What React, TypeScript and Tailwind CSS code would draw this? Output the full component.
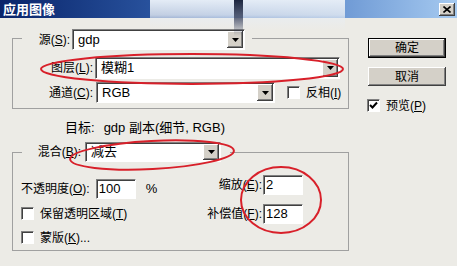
import type { ReactNode } from "react";

const sunken =
  "border border-t-[#808080] border-l-[#808080] border-b-white border-r-white shadow-[inset_1px_1px_0_#404040]";
const raised =
  "bg-[#d4d0c8] shadow-[inset_-1px_-1px_0_#404040,inset_1px_1px_0_#ffffff,inset_-2px_-2px_0_#808080]";

function Arrow() {
  return (
    <div className={`ml-auto mr-[1px] flex h-[calc(100%-2px)] w-[16px] shrink-0 items-center justify-center ${raised}`}>
      <svg width="7" height="4" viewBox="0 0 7 4">
        <path d="M0 0h7L3.5 4z" fill="#000" />
      </svg>
    </div>
  );
}

function Select({ value, className }: { value: string; className: string }) {
  return (
    <div className={`flex items-center bg-white ${sunken} ${className}`}>
      <span className="pl-[5px] text-[13px]">{value}</span>
      <Arrow />
    </div>
  );
}

function Input({ value }: { value: string }) {
  return (
    <div className={`flex h-[20px] w-[40px] items-center bg-white pl-[2px] text-[13px] ${sunken}`}>{value}</div>
  );
}

function Check({ checked, children }: { checked?: boolean; children: ReactNode }) {
  return (
    <div className="flex h-[13px] items-center">
      <div className={`flex h-[13px] w-[13px] items-center justify-center bg-white ${sunken}`}>
        {checked && (
          <svg width="9" height="9" viewBox="0 0 9 9">
            <path d="M1 4l2.5 2.5L8 1.5" stroke="#000" strokeWidth="2" fill="none" />
          </svg>
        )}
      </div>
      <span className="ml-[6px]">{children}</span>
    </div>
  );
}

function Btn({ children, def }: { children: ReactNode; def?: boolean }) {
  return (
    <div
      className={`flex items-center justify-center ${def ? "h-[20px] border border-black" : "h-[19px]"}`}
    >
      <div className={`flex h-full w-full items-center justify-center ${raised}`}>{children}</div>
    </div>
  );
}

export default function App() {
  return (
    <div className="relative h-[266px] w-[457px] overflow-hidden bg-[#ecebe6] font-['Liberation_Sans','Noto_Sans_CJK_SC',sans-serif] text-[12px] text-black">
      {/* title bar */}
      <div className="flex h-[18px] items-center justify-between bg-linear-to-r from-[#0a246a] via-[#3a6ab8] to-[#a6caf0] pl-[3px] pr-[2px]">
        <span className="text-[13px] font-bold leading-none text-white">应用图像</span>
        <div className={`flex h-[13px] w-[16px] items-center justify-center ${raised}`}>
          <svg width="8" height="7" viewBox="0 0 8 7">
            <path d="M0.5 0.5l7 6M7.5 0.5l-7 6" stroke="#000" strokeWidth="1.6" />
          </svg>
        </div>
      </div>

      <div className="flex">
        {/* left column */}
        <div className="ml-[12px] flex w-[337px] flex-col">
          <div className="mt-[20px] border border-[#a0a0a0] pb-[5px]">
            <div className="-mt-[10px] ml-[9px] flex h-[21px] w-[230px] items-center bg-[#ecebe6]">
              <span className="w-[50px] pr-[2px] text-right">
                源(<u>S</u>):
              </span>
              <Select value="gdp" className="h-[21px] w-[173px]" />
            </div>
            <div className="mt-[7px] flex h-[22px] items-center">
              <span className="w-[80px] text-right">
                图层(<u>L</u>):
              </span>
              <Select value="模糊1" className="ml-[2px] h-[22px] w-[245px]" />
            </div>
            <div className="mt-[3px] flex h-[21px] items-center">
              <span className="w-[80px] text-right">
                通道(<u>C</u>):
              </span>
              <Select value="RGB" className="ml-[3px] h-[21px] w-[179px]" />
              <div className="ml-[12px]">
                <Check>
                  反相(<u>I</u>)
                </Check>
              </div>
            </div>
          </div>

          <div className="mt-[11px] flex h-[16px] items-center pl-[53px] text-[13px]">
            <span>目标:</span>
            <span className="ml-[9px]">gdp 副本(细节, RGB)</span>
          </div>

          <div className="mt-[16px] border border-[#a0a0a0] pb-[6px]">
            <div className="-mt-[11px] ml-[9px] flex h-[20px] w-[208px] items-center bg-[#ecebe6]">
              <span className="w-[63px] pr-[4px] text-right">
                混合(<u>B</u>):
              </span>
              <Select value="减去" className="h-[20px] w-[136px]" />
            </div>
            <div className="flex items-start">
              <div className="flex flex-col pl-[8px] pt-[17px]">
                <div className="flex items-center">
                  <span>
                    不透明度(<u>O</u>):
                  </span>
                  <div className="ml-[6px]">
                    <Input value="100" />
                  </div>
                  <span className="ml-[10px] text-[13px]">%</span>
                </div>
                <div className="mt-[8px]">
                  <Check>
                    保留透明区域(<u>T</u>)
                  </Check>
                </div>
                <div className="mt-[11px]">
                  <Check>
                    蒙版(<u>K</u>)...
                  </Check>
                </div>
              </div>
              <div className="ml-auto flex flex-col items-end pr-[45px] pt-[13px]">
                <div className="flex items-center">
                  <span className="mr-[1px]">
                    缩放(<u>E</u>):
                  </span>
                  <Input value="2" />
                </div>
                <div className="mt-[9px] flex items-center">
                  <span className="mr-[1px]">
                    补偿值(<u>F</u>):
                  </span>
                  <Input value="128" />
                </div>
              </div>
            </div>
          </div>
        </div>

        {/* right column */}
        <div className="ml-[19px] flex w-[78px] flex-col pt-[20px]">
          <Btn def>确定</Btn>
          <div className="mt-[9px]">
            <Btn>取消</Btn>
          </div>
          <div className="-ml-[1px] mt-[13px]">
            <Check checked>
              预览(<u>P</u>)
            </Check>
          </div>
        </div>
      </div>

      {/* erased watermark smudge */}
      <div className="pointer-events-none absolute left-[150px] top-0 h-[30px] w-[195px] bg-linear-to-b from-[#e4ecf6] via-[#e8edf3]/80 to-transparent" />
      <div className="pointer-events-none absolute left-[234px] top-0 h-[36px] w-[9px] bg-linear-to-b from-[#1c2640] via-[#2a3350]/70 to-transparent" />

      {/* red annotation marks */}
      <svg className="pointer-events-none absolute left-0 top-0" width="457" height="266">
        <g fill="none" stroke="#d8202a" strokeWidth="2">
          <ellipse cx="192" cy="69" rx="151" ry="15" />
          <ellipse cx="152" cy="155" rx="82" ry="14" transform="rotate(-3 152 155)" />
          <ellipse cx="281" cy="200" rx="40" ry="33" />
        </g>
      </svg>
    </div>
  );
}
